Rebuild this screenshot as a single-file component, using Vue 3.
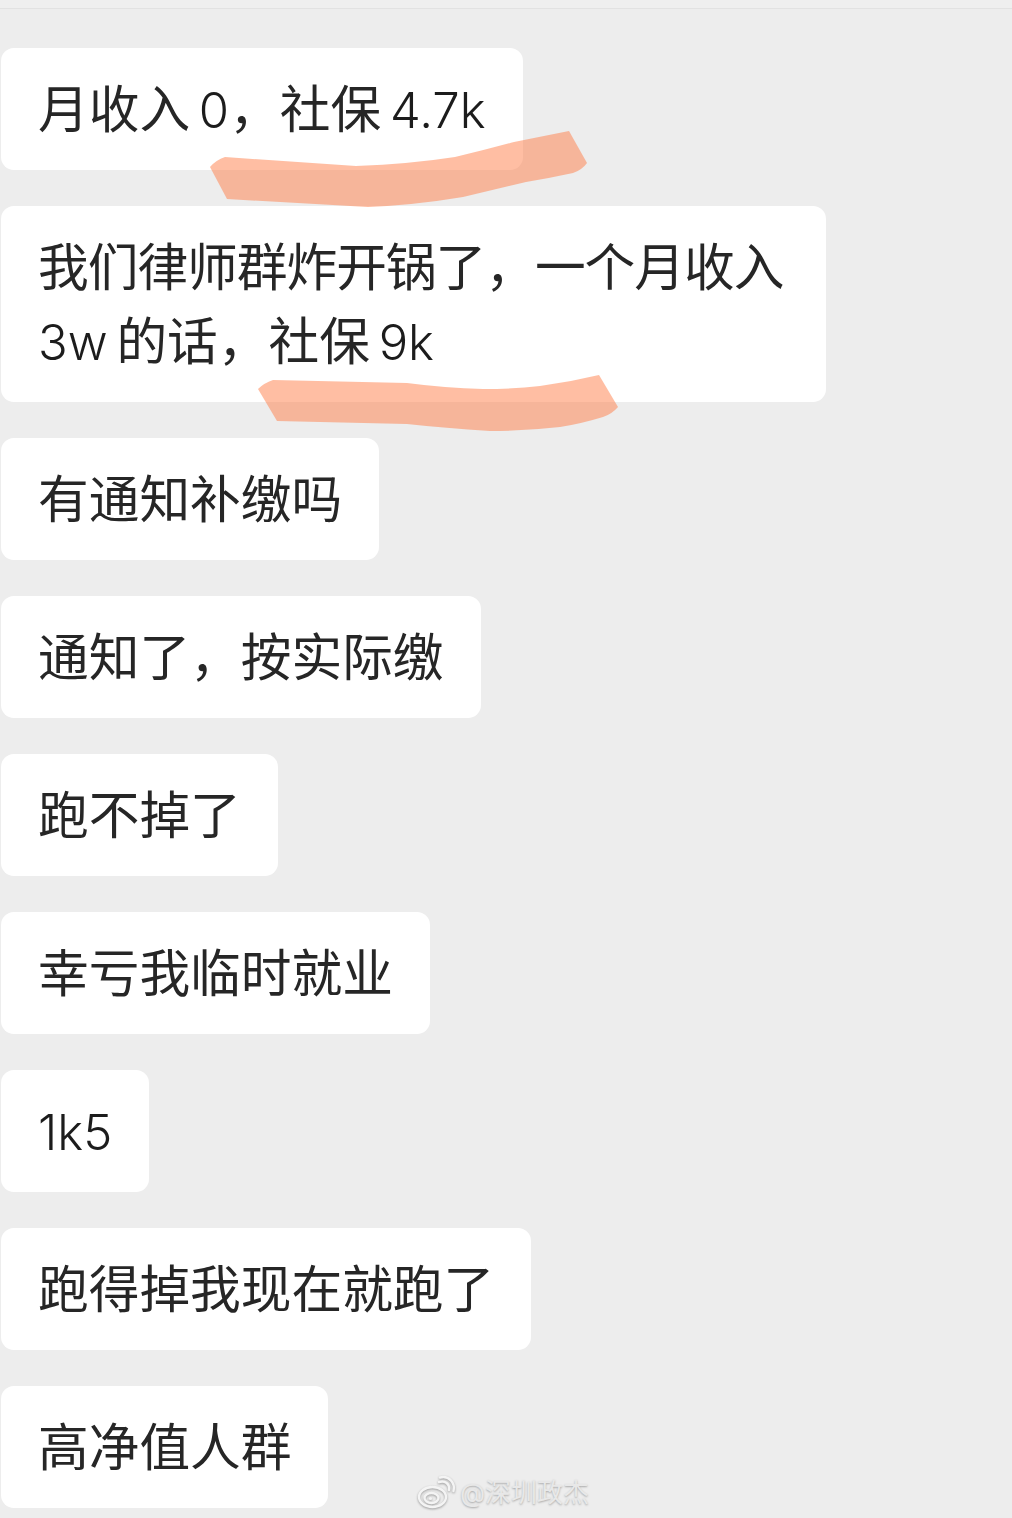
<script setup>
const messages = [
  { id: 1, lines: ['月收入 0，社保 4.7k'] },
  { id: 2, lines: ['我们律师群炸开锅了，一个月收入', '3w 的话，社保 9k'], wide: true },
  { id: 3, lines: ['有通知补缴吗'] },
  { id: 4, lines: ['通知了，按实际缴'] },
  { id: 5, lines: ['跑不掉了'] },
  { id: 6, lines: ['幸亏我临时就业'] },
  { id: 7, lines: ['1k5'] },
  { id: 8, lines: ['跑得掉我现在就跑了'] },
  { id: 9, lines: ['高净值人群'] }
]

// latin runs sit tighter than the chinese text around them
function runs(line) {
  return line.split(/([\x20-\x7e]+)/).filter(Boolean).map((text) => ({
    text,
    latin: /^[\x20-\x7e]/.test(text)
  }))
}
</script>

<template>
  <div class="page">
    <div class="topbar"></div>
    <div class="chat">
      <div v-for="m in messages" :key="m.id" class="bubble" :class="{ wide: m.wide }">
        <div v-for="line in m.lines" :key="line" class="line">
          <span v-for="(r, i) in runs(line)" :key="i" :class="{ latin: r.latin }">{{ r.text }}</span>
        </div>
      </div>
    </div>

    <!-- marker strokes drawn over the screenshot -->
    <svg class="marks" width="1012" height="1518" viewBox="0 0 1012 1518">
      <path d="M210 167 Q216 160 225 157 L356 166 Q410 164 455 157 Q485 150 514 142 L569 131 L587 163 Q582 170 573 173 Q550 178 526 182 L463 197 Q415 205 368 207 L227 199 Z" />
      <path d="M258 389 Q264 383 273 380 L407 383 Q445 388 483 389 Q515 389 540 386 Q570 382 599 375 L618 407 Q612 414 603 417 Q580 424 560 427 Q525 431 490 431 Q445 428 407 424 L277 421 Z" />
    </svg>

    <div class="watermark">
      <svg class="weibo" width="38" height="34" viewBox="0 0 38 34">
        <ellipse cx="15.5" cy="21" rx="13.5" ry="10" />
        <ellipse cx="14.5" cy="22" rx="7" ry="5" />
        <circle cx="13.5" cy="22.5" r="1.6" />
        <path d="M22 6 C28 4 33 8 32 14" />
        <path d="M23 1.5 C32 -1 38.5 7 36.5 15" />
      </svg>
      <span>@深圳政杰</span>
    </div>
  </div>
</template>

<style scoped>
.page {
  position: relative;
  width: 1012px;
  height: 1518px;
  overflow: hidden;
  background: #ededed;
  font-family: Inter, "Noto Sans CJK SC", sans-serif;
}

.topbar {
  height: 8px;
  border-bottom: 1px solid #e2e2e2;
  background: #efefef;
}

.chat {
  display: flex;
  flex-direction: column;
  align-items: flex-start;
  gap: 36px;
  padding: 39px 0 0 1px;
}

.bubble {
  box-sizing: border-box;
  height: 122px;
  padding: 25px 37px 0;
  background: #fff;
  border-radius: 13px;
  color: #262626;
  font-size: 50.7px;
  font-weight: 400;
  line-height: 74px;
  white-space: pre;
}

.bubble.wide {
  width: 825px;
  height: 196px;
}

.bubble.wide .line:first-child {
  letter-spacing: -1px;
}

.latin {
  font-size: 49px;
  font-weight: 340;
  word-spacing: -5px;
  color: #1c1c1c;
}

.marks {
  position: absolute;
  top: 0;
  left: 0;
  pointer-events: none;
}

.marks path {
  fill: #ff7d48;
  fill-opacity: 0.5;
}

.watermark {
  position: absolute;
  left: 417px;
  top: 1476px;
  display: flex;
  align-items: center;
  gap: 5px;
  color: #e8e8e8;
  font-size: 26px;
  line-height: 34px;
  text-shadow: 0 1px 2px #a8a8a8;
}

.weibo {
  overflow: visible;
  filter: drop-shadow(0 1px 1px #9a9a9a);
}

.weibo ellipse,
.weibo path {
  fill: none;
  stroke: #f4f4f4;
  stroke-width: 2.4;
  stroke-linecap: round;
}

.weibo circle {
  fill: #f4f4f4;
}
</style>

<style>
body {
  background: #ededed;
}
</style>
